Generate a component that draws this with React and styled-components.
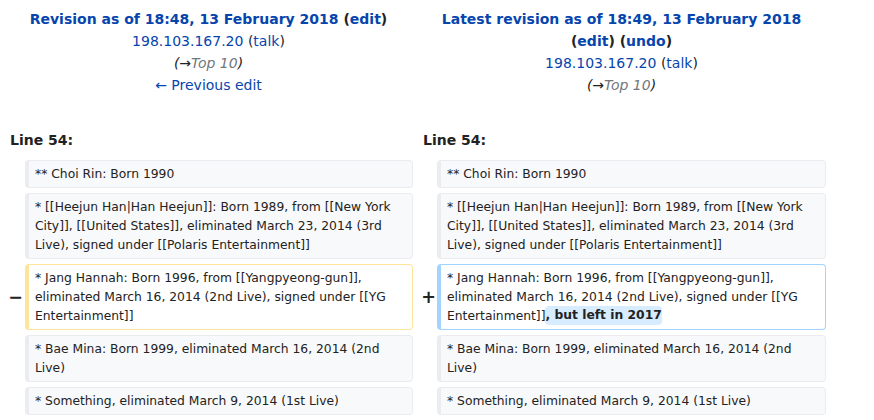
import React from "react";
import styled, { createGlobalStyle } from "styled-components";

const Global = createGlobalStyle`
  html, body { margin: 0; padding: 0; background: #fff; }
  body { font-family: "DejaVu Sans", sans-serif; color: #222; font-size: 14px; }
`;

const Page = styled.div`
  padding: 8px 0 0 4px;
  width: 826px;
`;

const Grid = styled.div`
  display: grid;
  grid-template-columns: 17px 388px 16px 389px;
  column-gap: 4px;
  row-gap: 5px;
`;

const Title = styled.div`
  grid-column: ${(p) => (p.$side === "new" ? "3 / span 2" : "1 / span 2")};
  text-align: center;
  line-height: 22px;
  font-size: 14px;
`;

const Line = styled.div`
  font-weight: ${(p) => (p.$bold ? 700 : 400)};
  font-style: ${(p) => (p.$italic ? "italic" : "normal")};
`;

const Link = styled.a`
  color: #0645ad;
  text-decoration: none;
`;

const Muted = styled.span`
  color: #72777d;
`;

const LineNo = styled.div`
  grid-column: ${(p) => (p.$side === "new" ? "3 / span 2" : "1 / span 2")};
  font-weight: 700;
  font-size: 14px;
  line-height: 20px;
  padding: 0 0 0 6px;
  margin-top: ${(p) => p.$top}px;
  margin-bottom: 5px;
`;

const Marker = styled.div`
  grid-column: ${(p) => (p.$side === "new" ? 3 : 1)};
  text-align: right;
  font-weight: 700;
  font-size: 17.5px;
  line-height: 66px;
  margin-right: ${(p) => p.$nudge}px;
`;

const Cell = styled.div`
  grid-column: ${(p) => (p.$side === "new" ? 4 : 2)};
  font-size: 12.32px;
  line-height: 19px;
  padding: 3.5px 6px 3.5px 6px;
  border-style: solid;
  border-width: 1px 1px 1px 4px;
  border-radius: 4px;
  white-space: pre-wrap;
  word-wrap: break-word;
  background: ${(p) => (p.$kind === "context" ? "#f8f9fa" : "#fff")};
  border-color: ${(p) =>
    p.$kind === "del" ? "#ffe49c" : p.$kind === "add" ? "#a3d3ff" : "#eaecf0"};
  color: #222;
`;

const Change = styled.ins`
  text-decoration: none;
  font-weight: 700;
  background: #d8ecff;
  border-radius: 4px;
  padding: 2.4px 0;
`;

const rows = [
  "** Choi Rin: Born 1990",
  "* [[Heejun Han|Han Heejun]]: Born 1989, from [[New York City]], [[United States]], eliminated March 23, 2014 (3rd Live), signed under [[Polaris Entertainment]]",
  null,
  "* Bae Mina: Born 1999, eliminated March 16, 2014 (2nd Live)",
  "* Something, eliminated March 9, 2014 (1st Live)",
];

const changed =
  "* Jang Hannah: Born 1996, from [[Yangpyeong-gun]], eliminated March 16, 2014 (2nd Live), signed under [[YG Entertainment]]";

export default function App() {
  return (
    <>
      <Global />
      <Page>
        <Grid>
          <Title $side="old">
            <Line $bold>
              <Link href="#">Revision as of 18:48, 13 February 2018</Link> (
              <Link href="#">edit</Link>)
            </Line>
            <Line>
              <Link href="#">198.103.167.20</Link> (<Link href="#">talk</Link>)
            </Line>
            <Line $italic>
              (→<Muted>Top 10</Muted>)
            </Line>
            <Line>
              <Link href="#">← Previous edit</Link>
            </Line>
          </Title>
          <Title $side="new">
            <Line $bold>
              <Link href="#">Latest revision as of 18:49, 13 February 2018</Link>
            </Line>
            <Line $bold>
              (<Link href="#">edit</Link>) (<Link href="#">undo</Link>)
            </Line>
            <Line>
              <Link href="#">198.103.167.20</Link> (<Link href="#">talk</Link>)
            </Line>
            <Line $italic>
              (→<Muted>Top 10</Muted>)
            </Line>
          </Title>

          <LineNo $side="old" $top={29}>Line 54:</LineNo>
          <LineNo $side="new" $top={29}>Line 54:</LineNo>

          {rows.map((text, i) =>
            text === null ? (
              <React.Fragment key={i}>
                <Marker $side="old" $nudge={-2}>−</Marker>
                <Cell $side="old" $kind="del">{changed}</Cell>
                <Marker $side="new" $nudge={-3}>+</Marker>
                <Cell $side="new" $kind="add">
                  {changed}
                  <Change>, but left in 2017</Change>
                </Cell>
              </React.Fragment>
            ) : (
              <React.Fragment key={i}>
                <Cell $side="old" $kind="context">{text}</Cell>
                <Cell $side="new" $kind="context">{text}</Cell>
              </React.Fragment>
            )
          )}
        </Grid>
      </Page>
    </>
  );
}
